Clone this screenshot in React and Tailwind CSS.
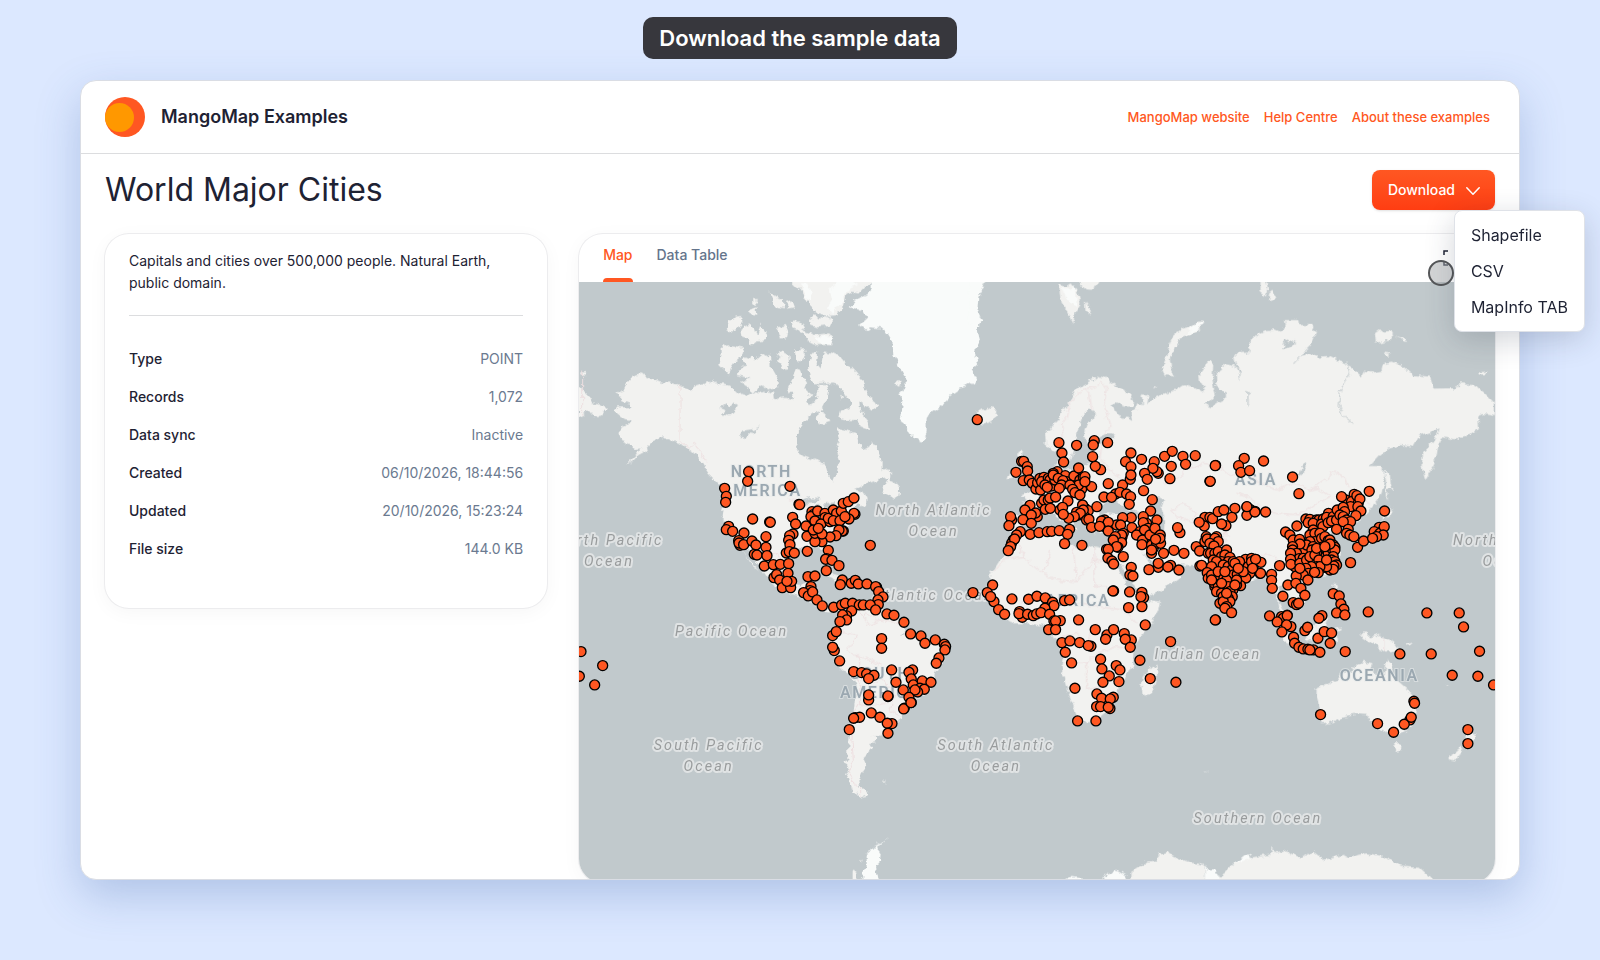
const details = [
  { label: 'Type', value: 'POINT' },
  { label: 'Records', value: '1,072' },
  { label: 'Data sync', value: 'Inactive' },
  { label: 'Created', value: '06/10/2026, 18:44:56' },
  { label: 'Updated', value: '20/10/2026, 15:23:24' },
  { label: 'File size', value: '144.0 KB' },
];

const links = ['MangoMap website', 'Help Centre', 'About these examples'];
const formats = ['Shapefile', 'CSV', 'MapInfo TAB'];

// Each region keeps its own origin, so its shapes stay in small local numbers.
const regions = [
  {
    name: 'north-america',
    origin: [-27, -186],
    land: [
      '142,518 160,510 170,490 185,472 213,460 235,470 270,484 330,494 345,505 365,512 375,500 400,492 412,484 420,490 432,482 450,492 470,495 490,505 505,520 530,527 545,515 570,520 590,512 610,522 612,540 640,532 670,540 665,515 650,520 662,490 672,460 678,445 692,450 700,470 712,490 706,505 715,520 735,525 712,532 712,545 720,555 740,540 745,515 745,495 770,495 775,510 770,540 760,560 745,575 725,580 700,605 685,630 675,665 680,690 700,705 740,720 765,730 775,765 790,783 797,765 800,745 812,725 803,700 800,680 808,660 802,640 805,625 830,632 860,640 865,670 880,690 898,680 905,665 925,695 935,720 935,750 955,745 965,765 950,775 910,785 880,795 855,808 880,815 890,830 888,855 872,862 858,850 850,882 838,905 820,932 800,947 780,960 770,980 785,1010 795,1030 785,1035 770,1010 762,990 745,980 725,982 700,980 675,990 665,1000 650,1015 645,1035 650,1070 660,1092 690,1100 700,1088 722,1084 735,1090 725,1115 700,1125 730,1140 748,1158 770,1165 790,1160 812,1168 830,1175 800,1176 770,1174 735,1156 700,1132 660,1120 630,1110 605,1090 580,1055 560,1020 540,995 520,975 508,970 530,1010 560,1045 566,1052 545,1035 520,990 500,962 480,940 465,910 455,890 458,860 466,820 456,797 440,785 420,765 410,750 398,728 385,710 365,695 340,675 305,662 285,652 270,655 250,665 240,675 225,695 205,705 190,722 168,734 198,707 215,685 195,688 180,675 165,670 145,640 155,625 180,612 185,600 165,597 150,587 135,575 145,562 170,562 185,560 180,550 155,545 150,530',
      '27,500 60,535 66,548 82,550 110,565 100,590 75,592 66,580 50,575 40,585 27,592',
      '30,458 52,456 50,464 32,464',
      '455,380 480,375 515,382 520,402 495,425 482,445 478,462 448,435 455,405',
      '520,418 545,405 552,420 565,412 578,400 590,410 600,398 602,440 622,475 625,500 600,510 570,495 560,512 540,515 530,498 510,490 545,475 500,465 512,445 528,435',
      '598,215 615,228 638,238 642,268 615,262 608,235',
      '648,240 662,235 672,262 655,266',
      '545,240 565,240 552,256',
      '540,268 560,262 562,285 545,282',
      '668,186 660,130 915,130 905,186 885,200 868,218 846,212 825,225 820,255 800,285 775,288 745,280 720,258 705,232 690,208',
      '720,300 735,285 745,298 765,288 790,300 782,318 740,322 722,316',
      '665,305 690,305 705,332 735,345 770,340 790,350 784,375 740,375 712,360 700,340 670,325',
      '470,325 480,300 495,290 515,288 518,302 500,328 480,333',
      '508,330 520,318 548,312 555,340 562,345 572,308 580,330 592,345 590,360 560,365 545,376 535,360 512,352',
      '620,322 648,315 655,335 650,358 625,358 632,340',
      '622,400 640,392 658,402 660,432 645,450 622,425 632,412',
      '672,392 705,388 708,402 690,425 675,420',
      '722,400 745,398 740,430 752,445 762,395 785,398 810,410 830,432 848,445 862,460 878,480 885,510 895,530 915,545 922,560 905,572 880,552 868,545 870,570 895,600 900,632 875,622 860,600 835,600 805,592 810,575 838,568 845,550 820,520 805,492 790,488 735,490 720,475 714,440',
      '740,600 745,572 760,580 782,605 762,612 745,608',
      '810,525 822,530 815,540',
      '965,755 958,780 975,790 988,805 985,830 968,835 950,822 935,812',
      '975,490 990,480 995,495 985,500',
      '760,1055 800,1065 830,1085 820,1092 780,1072',
    ],
    ice: [
      '780,208 800,186 800,130 850,130 850,186 865,195 840,205 820,225 822,245 800,265 790,285 770,262 785,240',
      '690,190 710,190 722,215 720,245 708,232',
      '735,352 760,345 788,350 782,374 750,372',
      '905,186 915,130 1250,130 1240,186 1225,230 1222,270 1235,300 1220,320 1230,360 1212,395 1225,430 1205,450 1222,475 1215,490 1170,505 1140,525 1120,555 1085,580 1070,600 1070,640 1058,665 1035,655 1020,640 1005,610 992,600 1000,545 985,520 1010,500 1010,480 985,435 970,405 968,370 950,340 935,325 900,322 890,330 870,315 892,295 880,272 842,262 855,245 890,225 905,208',
    ],
    water: [
      '447,565 470,550 482,560 490,548 505,558 490,575 478,588 455,582 468,570',
      '510,650 520,632 545,628 570,620 545,640 530,654',
      '690,845 722,832 750,835 735,850 705,852',
      '738,856 752,855 750,885 736,882',
      '762,850 790,848 800,870 778,880',
      '785,895 815,882 812,892 790,902',
    ],
    borders: [
      '330,494 330,660 355,682 370,670 390,692 412,724',
      '38,452 38,584',
      '650,838 690,848 760,870 800,885 840,852 862,845',
      '520,975 560,985 590,1000 620,998 640,1025',
    ],
    cities: '',
  },
  {
    name: 'americas',
    origin: [363, 504],
    land: [],
    ice: [],
    water: [],
    borders: [],
    cities:
      '146,65 143,94 270,109 74,115 79,139 77,157 297,163 299,164 158,207 209,216 211,217 86,229 79,239 98,244 132,249 116,272 120,286 117,279 131,284 156,273 168,285 198,260 198,292 163,313 171,315 201,317 193,348 278,202 287,222 279,252 269,257 266,271 270,284 259,309 268,305 283,309 322,304 220,344 241,343 266,341 222,383 230,374 264,370 239,390 247,413 272,413 275,394 261,394 318,228 321,259 336,185 340,194 333,200 353,183 345,213 375,190 375,203 363,222 390,215 385,205 400,180 410,190 400,212 430,195 424,183 430,160 445,155 462,144 465,193 462,190 447,207 420,212 430,243 427,243 417,240 408,257 390,261 366,275 345,275 345,250 366,252 340,240 355,235 435,200 385,301 380,326 377,328 396,331 417,347 379,362 511,286 324,380 345,378 333,410 330,422 311,428 325,438 338,426 351,450 367,468 401,472 427,390 421,404 454,400 466,391 475,402 501,402 530,412 527,410 536,425 549,441 534,450 535,464 425,465 436,460 458,460 478,465 490,465 511,465 527,480 455,483 440,498 428,495 440,510 420,515 561,492 582,496 612,517 398,557 409,545 403,602 398,592 419,633 545,566 545,595 632,552 663,558 675,580 706,570 733,583 737,590 735,600 717,624 709,640 461,665 485,668 500,672 522,676 506,686 575,660 588,697 638,660 627,667 634,687 640,705 667,693 693,697 610,720 660,715 673,718 653,726 645,720 627,742 634,758 506,750 506,735 564,740 564,738',
  },
  {
    name: 'south-america',
    origin: [-27, 954],
    land: [
      '805,25 820,35 850,20 862,5 920,15 960,50 990,60 1010,100 1040,105 1080,120 1135,135 1135,160 1110,200 1095,220 1090,255 1070,280 1040,290 1025,320 995,345 985,365 970,375 950,385 945,400 930,410 905,408 918,410 918,425 900,430 908,445 895,460 880,475 890,498 875,520 868,545 875,560 892,588 870,592 850,568 838,560 835,540 825,520 835,510 823,485 835,480 835,440 840,400 850,350 855,300 860,260 850,235 810,205 795,180 780,150 785,110 805,80 815,60',
      '848,815 862,820 862,850 848,850',
      '870,780 876,776 872,784',
      '932,543 938,542 938,547',
      '942,543 948,544 944,548',
    ],
    ice: ['868,850 890,800 890,765 902,755 912,740 930,730 954,712 930,735 918,742 932,760 930,785 918,800 928,850'],
    water: ['990,105 1008,94 1000,106', '864,553 872,552 868,560'],
    borders: [
      '858,15 880,55 900,75 930,60 960,65 1000,75',
      '800,85 840,100 862,105 850,130 832,145 850,165 880,170 910,185 935,195',
      '862,165 870,190 855,215 870,260 868,310 848,350 846,420 850,480 835,515 850,550 872,560 872,588',
      '870,240 905,250 940,235 950,260 975,280 970,310 955,330 990,350',
      '870,310 900,320 950,310',
      '880,55 885,35 920,60',
    ],
    cities:
      '838,389 856,353 869,352 851,355 904,339 930,352 966,371 952,370 954,400 1003,325 1001,327 1023,308 33,155 98,197 74,255 28,229',
  },
  {
    name: 'eurasia',
    origin: [993, -36],
    land: [
      '405,485 420,480 445,450 460,420 475,400 490,375 500,355 520,345 545,330 560,320 575,328 590,318 600,335 630,355 660,370 672,395 670,410 645,410 620,400 608,405 615,420 628,435 640,452 650,440 668,450 662,430 680,415 685,400 700,405 695,380 702,372 715,382 712,400 730,385 765,370 800,355 820,342 850,350 880,368 885,360 870,335 868,310 885,285 898,272 910,280 908,330 912,355 918,375 900,395 880,403 905,412 930,395 948,385 948,365 932,358 920,350 918,310 935,300 940,285 965,290 985,300 992,330 992,300 978,285 972,250 1015,248 1020,215 1045,192 1070,180 1095,178 1110,185 1128,168 1125,150 1165,150 1168,165 1205,165 1215,190 1200,225 1185,240 1172,258 1200,250 1220,260 1255,258 1280,270 1310,280 1335,300 1355,320 1365,302 1385,308 1415,302 1420,280 1445,275 1480,290 1510,315 1560,320 1572,356 1605,355 1640,355 1650,340 1690,342 1720,365 1755,400 1755,438 1720,432 1705,440 1708,475 1670,500 1640,508 1597,502 1585,525 1580,560 1565,600 1547,630 1535,590 1540,550 1570,515 1590,475 1565,485 1530,495 1510,530 1470,525 1440,535 1415,550 1380,588 1410,588 1425,600 1420,640 1415,670 1390,705 1350,750 1325,770 1335,795 1310,800 1300,770 1285,765 1260,790 1275,820 1290,850 1285,890 1260,915 1220,920 1190,930 1170,950 1195,980 1180,1000 1160,1020 1145,995 1130,970 1120,945 1108,950 1108,1000 1125,1035 1135,1060 1120,1050 1105,1010 1100,970 1085,940 1070,910 1040,920 1000,950 975,980 965,1020 950,1035 930,1010 910,960 890,920 870,900 850,885 825,885 800,880 780,875 810,900 808,925 780,945 750,965 705,983 700,990 750,995 745,1020 725,1060 690,1100 670,1140 670,1190 645,1220 630,1250 610,1280 600,1310 580,1330 555,1350 525,1355 505,1350 495,1320 475,1270 460,1220 455,1190 460,1150 445,1120 425,1090 405,1070 360,1060 310,1060 280,1040 255,1000 240,970 235,950 245,910 270,870 295,845 310,820 320,795 292,775 288,740 330,735 358,735 350,710 335,700 350,690 335,672 360,665 385,650 415,620 430,595 445,580 445,550 425,540 408,525',
      '330,540 342,540 338,560 355,585 372,620 368,640 330,642 345,610 330,580 322,555',
      '305,600 325,590 328,620 292,630 298,612',
      '190,415 202,428 215,418 228,422 250,408 263,430 250,450 225,460 205,455 192,440 205,436',
      '755,295 768,265 775,230 790,200 820,175 845,168 865,155 882,155 870,175 835,195 810,205 795,230 780,265 785,300 795,320 765,315',
      '448,45 470,50 485,40 500,60 512,100 495,130 490,160 470,120 452,95',
      '508,36 500,-20 580,-20 568,36 552,60 530,58',
      '525,95 535,108 546,122 540,136 527,126',
      '1395,190 1410,178 1425,185 1445,182 1450,200 1440,212 1398,218',
      '1462,200 1480,205 1495,215 1480,215',
      '1422,248 1440,250 1430,258',
      '1705,308 1730,304 1728,312 1708,314',
      '730,352 738,352 735,358',
      '1052,36 1050,-20 1070,-20 1066,36 1072,60 1068,80 1052,66',
      '1078,70 1088,62 1096,84 1074,92',
      '1425,605 1440,610 1442,640 1448,658 1432,660 1434,695 1428,680 1428,640',
      '1415,718 1432,712 1452,722 1425,745 1415,735',
      '1420,745 1432,770 1425,800 1390,815 1350,830 1330,830 1360,805 1400,785',
      '740,1180 742,1210 730,1260 715,1278 698,1275 694,1245 705,1215 725,1195',
    ],
    ice: [
      '180,36 175,-20 240,-20 225,36 215,60 205,80 200,120 215,150 200,170 180,160',
      '845,170 868,158 880,158 862,178 830,192',
      '458,50 480,60 495,45 498,110 470,90',
    ],
    water: [
      '450,560 470,575 485,568 495,520 500,490 512,455 525,425 540,418 556,426 545,445 525,475 520,505 540,520 590,490 608,490 612,502 598,515 545,535 540,580 500,600 470,602 450,590',
      '310,785 335,770 360,760 380,735 410,725 430,725 450,750 480,770 500,780 495,760 470,740 460,720 480,725 500,745 525,760 540,780 555,795 560,775 580,790 620,785 645,785 640,820 610,835 580,835 550,828 510,835 480,820 465,800 460,780 420,785 360,790 320,795',
      '565,720 590,690 620,695 630,705 680,725 680,735 640,735 590,730 570,740',
      '718,685 745,682 762,690 755,715 765,750 762,780 742,785 735,740 722,715',
      '605,850 630,880 660,920 680,960 690,972 670,970 650,940 625,895',
      '700,850 720,870 750,885 780,890 770,900 740,900 715,880',
      '1172,600 1188,578 1190,590 1178,612 1160,618',
      '1118,215 1130,210 1135,220 1155,210 1158,220 1140,228 1122,238',
      '1012,366 1016,366 1016,404 1013,404',
    ],
    borders: [
      '460,500 455,460 470,440 475,405 495,380 520,358 540,370 545,420',
      '520,358 560,350 575,335 590,355 582,400 600,470 580,500 570,560 600,600 630,620',
      '760,640 800,630 830,600 880,580 930,590 960,620 1000,600 1050,640',
      '1050,640 1100,660 1150,640 1200,660 1260,620 1270,605 1300,620 1320,660 1380,700',
      '980,670 1020,680 1060,720 1110,730 1170,735 1220,700 1260,680 1225,655 1200,660',
      '785,720 820,700 860,730 850,760 800,740 785,720',
      '320,800 340,860 290,865 250,905',
      '340,860 400,910 440,930 500,935 550,870 640,890',
      '420,840 400,910', '490,830 500,935', '555,830 555,950 630,950',
      '330,1000 400,980 440,990 500,1000 560,1010 640,1020 680,1060',
      '460,1180 530,1180 560,1150 620,1130 660,1140',
      '530,1180 530,1260 570,1250 610,1200 640,1200',
      '455,1100 500,1090 530,1120 560,1060',
      '900,860 950,820 940,790 960,800', '960,860 1010,880 1070,850 1120,880',
    ],
    rivers: ['1315,282 1322,310 1300,340 1290,370 1288,410 1300,435 1328,460', '1172,258 1150,282'],
    cities: '202,449',
  },
  {
    name: 'europe-africa',
    origin: [1173, 414],
    land: [],
    ice: [],
    water: [],
    borders: [],
    cities:
      '267,68 276,99 281,126 320,76 373,62 370,75 413,68 368,110 392,149 376,139 155,124 161,124 138,157 172,140 173,153 160,182 178,180 187,190 198,207 203,188 210,175 222,172 212,210 215,185 235,175 240,180 225,195 245,198 232,202 262,155 250,160 255,180 250,165 286,167 265,175 290,185 279,182 275,195 268,205 320,190 312,168 330,180 326,144 340,172 345,170 335,208 326,195 300,195 308,208 315,218 294,243 330,225 365,200 345,185 215,250 222,240 235,240 240,234 257,231 270,270 278,262 226,268 241,265 345,265 338,255 355,272 381,260 325,285 320,277 345,290 340,270 331,280 350,300 313,290 296,295 280,283 357,298 180,256 165,270 202,290 197,279 184,285 159,299 184,310 125,300 122,290 117,317 151,335 140,345 130,360 125,370 134,357 122,380 115,392 181,343 207,338 232,335 245,334 268,332 299,328 293,343 284,371 336,376 415,191 458,195 402,231 437,222 425,232 450,217 470,222 482,230 478,253 483,99 467,125 515,118 483,140 481,178 483,165 553,125 584,109 607,94 639,109 676,107 647,133 604,139 565,160 561,155 549,145 524,160 532,178 600,176 737,136 720,184 521,212 547,239 542,273 561,300 520,290 530,310 520,308 484,293 458,293 440,315 452,315 486,323 404,300 395,303 405,320 415,307 365,322 389,319 415,333 460,340 456,352 455,345 436,350 455,368 444,382 430,360 440,380 410,388 415,388 414,414 426,423 431,432 460,410 510,335 535,325 520,345 500,345 524,330 525,360 518,360 516,374 540,345 550,385 545,375 555,325 571,345 560,370 572,370 570,355 557,358 545,400 545,390 581,400 612,391 642,400 630,338 623,323 565,442 537,449 565,430 602,436 594,441 627,450 484,442 480,465 489,468 68,495 9,518 52,518 72,545 62,530 86,569 104,583 126,537 176,538 201,529 226,534 248,547 252,557 284,542 299,540 157,592 149,575 147,581 173,583 190,587 200,582 220,575 225,565 213,578 239,583 252,603 271,602 257,603 236,629 257,629 326,600 431,513 429,513 479,516 516,517 521,533 513,530 516,560 476,563 526,615 276,668 300,663 329,668 363,679 355,677 286,697 305,729 376,629 411,645 407,658 431,629 463,641 484,660 466,658 481,682 392,718 396,747 439,737 450,750 418,768 399,787 447,785 510,721 541,776 618,787 602,665 315,805 381,822 395,835 430,832 421,837 380,860 392,860 420,866 415,862 323,903 378,903 737,600 705,292 703,318 688,307 720,292 728,296 745,275 762,270 795,265 786,292 768,317 755,312 831,261 840,268 855,274 831,286 679,380 689,393 690,438 695,436 740,350 709,350 705,365 712,357 735,355 745,365 720,370 732,378 715,400 722,400 735,400 745,395 755,410 770,390 765,405 780,412 730,420 755,425 740,425 775,425 760,435 775,440 725,440 712,458 715,475 725,465 750,465 740,480 745,455 785,450 790,425 790,465 802,463 762,475 815,440 820,430 827,418 809,425 835,440 845,415 840,460 828,474 812,497 857,418 850,440 870,460 735,500 733,490 770,480 800,495 800,480 775,500 789,510 780,515 787,530 750,510 745,500 740,515 755,520 760,530 775,535 780,545 750,550 760,545 770,560 765,565 785,578 795,430 820,455 845,425 755,490 770,520 795,495 725,480 765,455 805,445',
  },
  {
    name: 'asia',
    origin: [1863, 114],
    land: [],
    ice: [],
    water: [],
    borders: [],
    cities:
      '46,437 31,484 133,415 116,437 123,457 149,452 191,423 278,471 297,521 197,576 165,576 141,560 215,763 215,781 217,805 239,737 183,727 167,718 182,760 158,745 291,618 257,636 270,645 280,660 299,658 318,597 330,598 350,600 357,600 325,608 340,610 370,597 365,612 369,620 386,580 380,592 385,608 400,590 395,603 412,570 410,600 438,540 425,530 463,523 455,545 471,527 475,550 480,537 508,514 452,560 430,562 434,575 474,560 483,573 468,587 420,585 430,590 440,600 452,605 430,605 410,628 445,628 440,640 450,645 462,650 473,682 491,663 538,622 523,635 545,635 540,640 553,620 550,645 530,650 518,655 554,573 340,630 355,645 330,645 345,640 360,640 345,665 365,655 375,650 385,662 390,660 400,675 405,682 330,665 310,690 320,675 340,680 370,680 365,697 336,690 300,672 278,680 278,690 290,700 272,700 298,716 310,715 272,718 285,740 273,733 300,730 320,720 330,710 350,700 345,705 380,690 385,700 370,730 357,720 395,685 405,690 390,672 400,710 395,720 405,725 410,735 402,738 390,750 400,748 375,742 380,740 350,740 360,740 330,750 335,740 318,745 325,760 310,765 289,768 324,780 355,758 344,757 264,795 288,790 303,805 315,826 249,829 280,848 290,854 296,850 452,728 400,821 418,828 423,852 432,868 410,879 435,885 505,876 681,879 778,879 209,888 245,890 262,886 300,745 350,685 375,680 380,720',
  },
  {
    name: 'oceania',
    origin: [1863, 894],
    land: [
      '350,325 385,310 410,300 425,275 445,275 465,260 490,243 518,250 510,270 540,290 555,285 562,235 575,260 590,300 620,325 640,350 648,390 635,430 610,455 580,470 545,450 515,425 500,405 465,402 430,410 415,420 370,430 360,415 362,395 350,350',
      '582,490 605,490 603,510 590,512',
      '478,158 500,158 510,172 540,165 580,185 600,215 555,218 535,205 510,185 490,175',
      '800,440 812,460 830,460 820,480 800,500',
      '785,500 790,512 775,530 765,545 745,540 760,520',
      '310,150 345,130 370,105 385,115 370,150 355,185 320,180',
      '205,98 240,130 280,185 290,200 260,190 240,160',
      '290,200 370,212 365,222 300,215',
      '385,150 425,143 425,148 400,156 412,182 400,192 385,180',
      '400,12 410,12 412,30 402,26',
      '425,75 445,85 438,105 425,98',
      '615,192 632,186 630,192 618,198',
      '732,312 744,318 742,320',
      '12,574 20,577 14,580',
      '-206,915 -205,875 -180,858 -155,845 -130,842 -122,822 -100,815 -80,828 -30,848 15,855 14,915',
      '50,915 60,890 100,850 118,840 140,822 160,832 210,824 216,800 222,820 262,808 272,820 300,832 340,815 372,840 430,825 450,835 475,825 500,820 545,828 575,840 600,860 660,864 715,915',
    ],
    ice: [
      '14,915 16,858 25,868 45,868 60,895 60,915',
      '-300,915 -280,882 -250,872 -222,888 -214,915',
      '-404,900 -385,888 -350,894 -345,902',
      '100,850 118,840 140,822 160,832 145,840',
    ],
    water: [],
    borders: ['552,172 552,216', '345,135 360,150 340,160'],
    cities:
      '250,115 232,126 262,107 273,140 260,135 246,156 281,172 284,190 297,202 310,207 324,208 341,210 360,217 330,210 315,152 323,142 366,107 357,115 354,175 373,155 395,159 391,190 436,215 600,222 694,222 839,214 791,141 757,286 834,289 881,315 642,364 644,370 362,404 533,431 581,457 630,420 613,433 634,412 804,449 804,491 46,120',
  },
];

const continents = [
  { x: 547, y: 584, text: 'NORTH' },
  { x: 547, y: 642, text: 'AMERICA' },
  { x: 904, y: 1190, text: 'SOUTH' },
  { x: 904, y: 1247, text: 'AMERICA' },
  { x: 1497, y: 971, text: 'AFRICA' },
  { x: 2031, y: 609, text: 'ASIA' },
  { x: 2401, y: 1198, text: 'OCEANIA' },
];

const oceans = [
  { x: 1064, y: 699, text: 'North Atlantic' },
  { x: 1064, y: 762, text: 'Ocean' },
  { x: 1064, y: 953, text: 'Atlantic Ocean' },
  { x: 458, y: 1062, text: 'Pacific Ocean' },
  { x: 389, y: 1404, text: 'South Pacific' },
  { x: 389, y: 1467, text: 'Ocean' },
  { x: 1251, y: 1404, text: 'South Atlantic' },
  { x: 1251, y: 1467, text: 'Ocean' },
  { x: 1887, y: 1132, text: 'Indian Ocean' },
  { x: 2037, y: 1622, text: 'Southern Ocean' },
  { x: 90, y: 790, text: 'North Pacific' },
  { x: 90, y: 853, text: 'Ocean' },
  { x: 2786, y: 790, text: 'North Pacific' },
  { x: 2786, y: 853, text: 'Ocean' },
];

const toPoints = list => list.split(' ').filter(Boolean).map(pair => pair.split(','));
const shift = region => `translate(${region.origin[0]} ${region.origin[1]})`;

function WorldMap() {
  return (
    <svg viewBox="0 0 2748 1806" preserveAspectRatio="xMidYMin slice" className="block min-h-0 w-full flex-1 bg-[#c1c9cc]" role="img" aria-label="Map of world major cities">
      {/* Breaks up the straight polygon edges into a ragged coastline */}
      <filter id="coast" x="-60" y="-60" width="2868" height="1926" filterUnits="userSpaceOnUse" colorInterpolationFilters="sRGB">
        <feTurbulence type="fractalNoise" baseFrequency="0.05" numOctaves="3" seed="4" />
        <feDisplacementMap in="SourceGraphic" scale="20" xChannelSelector="R" yChannelSelector="G" />
      </filter>
      <g filter="url(#coast)">
        {regions.map(region => (
          <g key={region.name} transform={shift(region)}>
            {region.land.map(points => <polygon key={points} points={points} fill="#f2f2f0" />)}
            {region.ice.map(points => <polygon key={points} points={points} fill="#f9fbfa" />)}
          </g>
        ))}
        {regions.map(region => (
          <g key={region.name} transform={shift(region)} fill="none">
            {region.borders.map(points => <polyline key={points} points={points} stroke="#eedfe0" strokeWidth="3" />)}
            {region.water.map(points => <polygon key={points} points={points} fill="#c1c9cc" />)}
            {region.rivers?.map(points => <polyline key={points} points={points} stroke="#c1c9cc" strokeWidth="3" />)}
          </g>
        ))}
      </g>
      <g className="font-[Roboto,sans-serif] tracking-widest" textAnchor="middle" paintOrder="stroke" fontSize="48" fontWeight="600" fill="#9ba8b1" stroke="#e6e9ea" strokeOpacity="0.6" strokeWidth="6">
        {continents.map(label => <text key={`${label.text}-${label.x}`} x={label.x} y={label.y}>{label.text}</text>)}
      </g>
      <g className="font-[Roboto,sans-serif] tracking-[0.15em]" textAnchor="middle" paintOrder="stroke" fontSize="43" fontStyle="italic" fill="#999c9d" stroke="#e0e3e4" strokeLinejoin="round" strokeWidth="12">
        {oceans.map(label => <text key={`${label.text}-${label.x}-${label.y}`} x={label.x} y={label.y}>{label.text}</text>)}
      </g>
      {regions.map(region => (
        <g key={region.name} transform={shift(region)} fill="#ff5722" stroke="#000" strokeWidth="4">
          {toPoints(region.cities).map(([x, y], index) => <circle key={index} cx={x} cy={y} r="15" />)}
        </g>
      ))}
    </svg>
  );
}

function DownloadMenu() {
  return (
    <div className="relative">
      <button type="button" aria-haspopup="menu" aria-expanded="true" className="flex h-10 items-center gap-[11px] rounded-lg bg-linear-to-b from-[#ff5722] to-[#ff3d12] pr-[15px] pl-4 text-sm font-medium text-white shadow-sm">
        Download
        <svg viewBox="0 0 14 8" className="mt-0.5 h-2 w-3.5" fill="none" stroke="currentColor" strokeWidth="1.5" strokeLinecap="round" strokeLinejoin="round" aria-hidden="true">
          <path d="M.8.8 7 7.2 13.2.8" />
        </svg>
      </button>
      <ul role="menu" className="absolute top-full left-[82px] z-10 rounded-lg border border-[#dfe2e8] bg-white py-1.5 shadow-[0_8px_30px_rgba(40,50,70,0.2)]">
        {formats.map(format => (
          <li key={format} role="none">
            <button type="button" role="menuitem" className="h-9 w-full px-4 text-left text-base whitespace-nowrap">{format}</button>
          </li>
        ))}
      </ul>
    </div>
  );
}

export default function App() {
  return (
    <div className="flex h-screen flex-col bg-[#dce8ff] px-20 pt-[17px] pb-20 font-[Inter,sans-serif] text-[#1e2233]">
      <div className="mb-[21px] flex h-[42px] shrink-0 items-center self-center rounded-[10px] bg-[#37373d] px-4 text-[22px] font-semibold text-white">
        Download the sample data
      </div>

      <div className="flex min-h-0 flex-1 flex-col rounded-2xl border border-[#dadde4] bg-white shadow-[0_16px_44px_rgba(60,100,170,0.28)]">
        <header className="flex h-[73px] shrink-0 items-center justify-between border-b border-[#dcdddf] pr-[29px] pl-6">
          <div className="flex items-center gap-4">
            <svg viewBox="0 0 40 40" className="size-10" aria-hidden="true">
              <circle cx="20" cy="20" r="20" fill="#ff5722" />
              <circle cx="14.5" cy="20.5" r="14.5" fill="#ff9800" />
            </svg>
            <span className="text-lg font-semibold">MangoMap Examples</span>
          </div>
          <nav className="flex gap-3.5 pt-0.5 text-[13px] font-medium text-[#ff5722]">
            {links.map(link => <a key={link} href="#">{link}</a>)}
          </nav>
        </header>

        <div className="flex shrink-0 items-center justify-between px-6 pt-4">
          <h1 className="text-[32px] leading-10">World Major Cities</h1>
          <DownloadMenu />
        </div>

        <main className="grid min-h-0 flex-1 grid-cols-[minmax(0,14fr)_minmax(0,29fr)] gap-8 overflow-hidden rounded-b-2xl px-6 pt-6">
          <section className="self-start rounded-3xl px-6 pt-4 pb-10 text-sm shadow-[0_4px_20px_rgba(0,0,0,0.04)] ring-1 ring-[#ececee]">
            <p className="border-b border-[#dcdddf] pb-[21px] leading-[22px]">
              Capitals and cities over 500,000 people. Natural Earth, public domain.
            </p>
            <dl className="mt-6">
              {details.map(item => (
                <div key={item.label} className="flex h-[38px] items-center justify-between">
                  <dt className="font-medium">{item.label}</dt>
                  <dd className="text-[#6b7a90]">{item.value}</dd>
                </div>
              ))}
            </dl>
          </section>

          <section className="-mb-1 flex min-h-0 flex-col overflow-hidden rounded-3xl shadow-[0_4px_20px_rgba(0,0,0,0.04)] ring-1 ring-[#ececee]">
            <div className="relative flex h-12 shrink-0 items-stretch justify-between pr-9 pl-6">
              <div role="tablist" className="flex gap-6 text-sm font-medium">
                <button type="button" role="tab" aria-selected="true" className="flex flex-col justify-between text-[#ff5722]">
                  <span className="flex h-[42px] items-center">Map</span>
                  <span className="h-1 w-full rounded-t bg-[#ff5722]" />
                </button>
                <button type="button" role="tab" aria-selected="false" className="flex h-[42px] items-center text-[#64748b]">Data Table</button>
              </div>
              <button type="button" aria-label="Full screen">
                <svg viewBox="0 0 16 16" className="size-4" fill="none" stroke="#1e2233" strokeWidth="1.5" aria-hidden="true">
                  <path d="M1 5V1h4M11 1h4v4M15 11v4h-4M5 15H1v-4" />
                </svg>
              </button>
              <span className="absolute right-[41px] -bottom-[4px] size-[26px] rounded-full border-2 border-[#555759] bg-[#a8acad]/50" />
            </div>
            <WorldMap />
          </section>
        </main>
      </div>
    </div>
  );
}
